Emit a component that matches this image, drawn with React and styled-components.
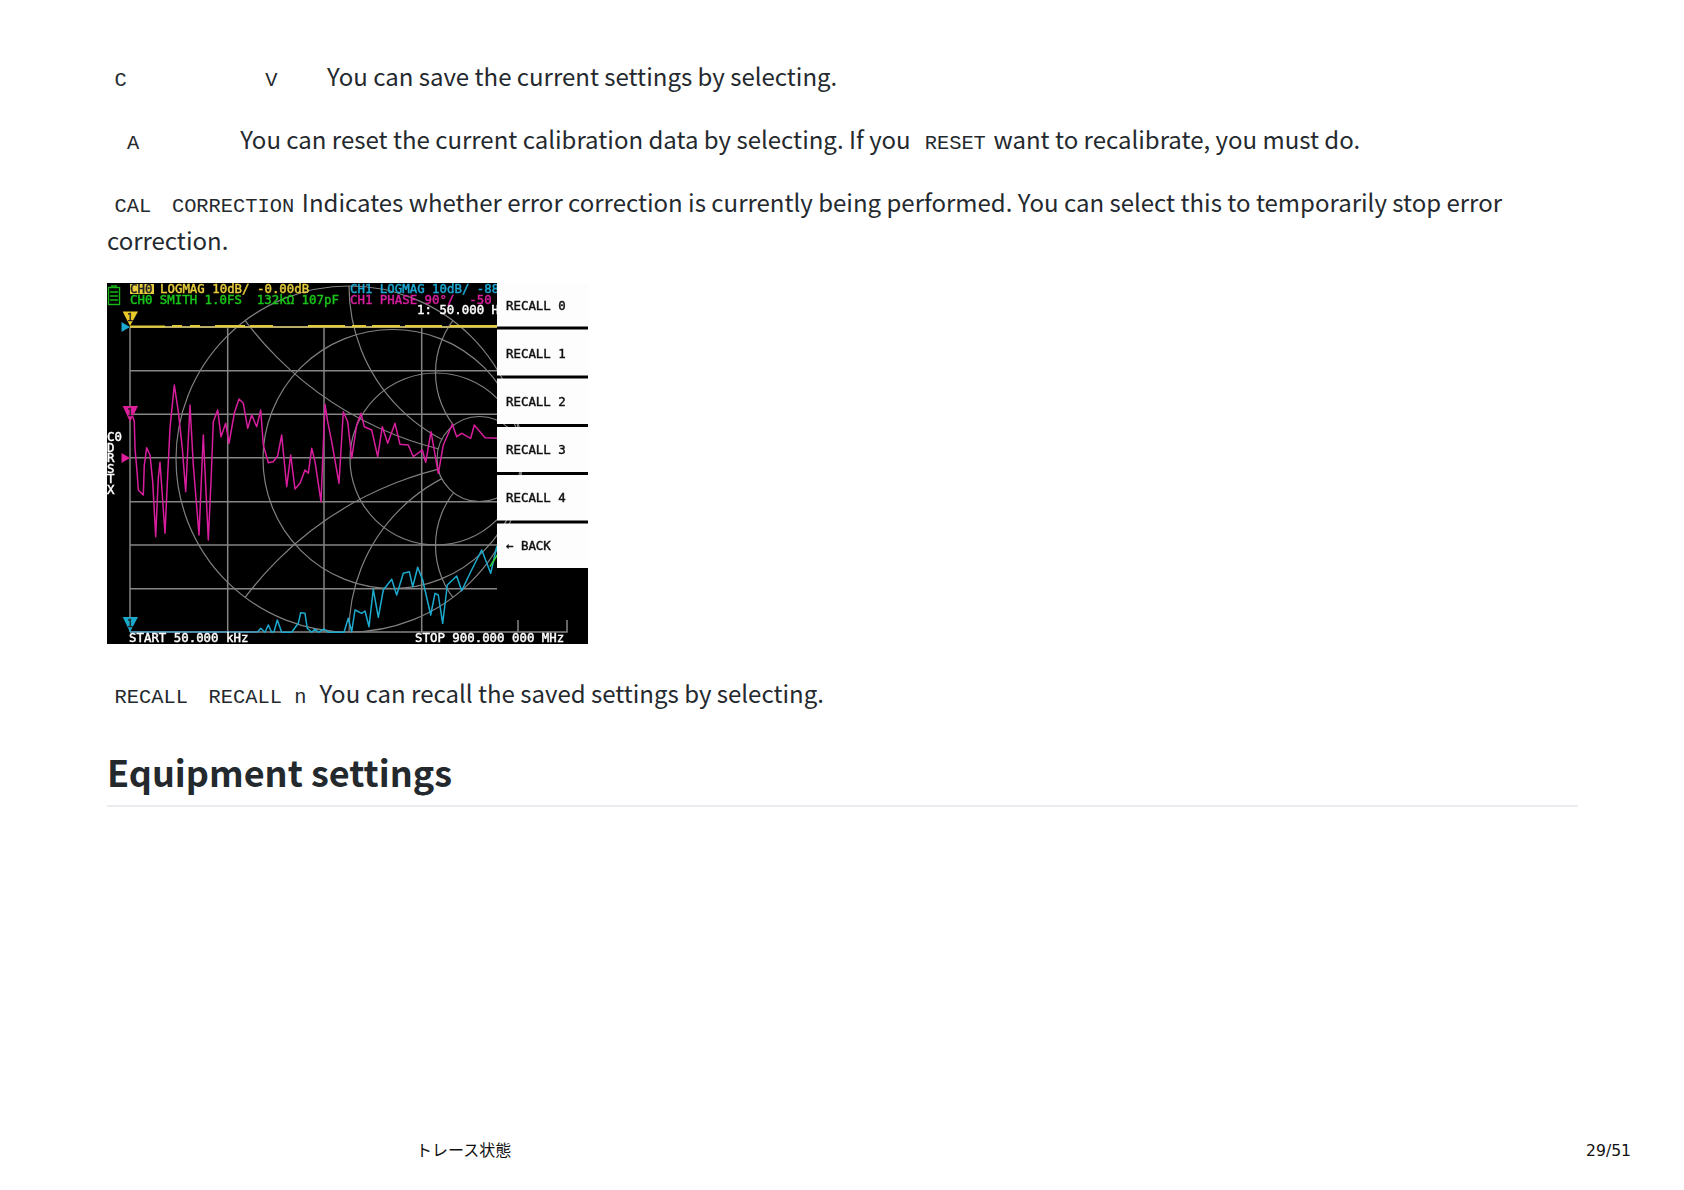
import React from "react";
import styled, { createGlobalStyle } from "styled-components";

const Global = createGlobalStyle`
  html, body { margin: 0; padding: 0; background: #fff; }
  body { font-family: "Noto Sans CJK JP", "Noto Sans", sans-serif; }
`;

const Page = styled.div`
  width: 1684px;
  height: 1190px;
  display: flex;
  flex-direction: column;
  overflow: hidden;
  background: #fff;
`;

const Main = styled.main`
  flex: 1;
  padding: 57px 106px 0 107px;
  color: #24292e;
  font-family: "Noto Sans CJK JP", sans-serif;
  font-size: 24px;
  line-height: 38.4px;
`;

const Para = styled.p`
  margin: 0 0 24.6px;
`;

const Code = styled.code`
  font-family: "Liberation Mono", monospace;
  font-size: 20.4px;
  line-height: 1;
  padding: 0 7.6px;
  margin-left: ${(p) => p.$before || 0}px;
  margin-right: ${(p) => p.$after || 0}px;
`;

const Heading = styled.h2`
  margin: 36px 0 0;
  padding-bottom: 11px;
  border-bottom: 2px solid #eaecef;
  font-size: 36px;
  line-height: 1.25;
  font-weight: 700;
  color: #24292e;
`;

const ShotWrap = styled.div`
  margin: -1px 0 30px;
  line-height: 0;
`;

const Shot = styled.svg`
  display: block;
  width: 481px;
  height: 361px;
  filter: blur(0.45px);
`;

const ScreenText = styled.text`
  font-family: "DejaVu Sans Mono", "Liberation Mono", monospace;
  font-size: 12.4px;
  font-weight: 400;
  white-space: pre;
  fill: ${(p) => p.$color || "#fff"};
  stroke: ${(p) => p.$color || "#fff"};
  stroke-width: 0.45px;
`;

const Footer = styled.footer`
  display: flex;
  justify-content: space-between;
  align-items: baseline;
  padding: 0 53px 28px 416px;
  font-family: "DejaVu Sans", "Noto Sans CJK JP", sans-serif;
  font-size: 15.6px;
  line-height: 22px;
  color: #111;
`;

const FooterTitle = styled.span`
  font-size: 16px;
`;

const pts = (ox, oy, a) =>
  a.map(([x, y]) => `${(ox + x / 3).toFixed(1)},${(oy + y / 3).toFixed(1)}`).join(" ");

const magentaA = [[20,85],[28,110],[30,190],[37,270],[40,315],[55,330],[58,240],[65,188],[75,210],[83,290],[92,455],[100,280],[105,232],[120,445],[128,270],[135,130],[148,0],[160,80],[172,190],[182,320],[195,60],[205,240],[222,450],[235,150],[250,465],[258,290],[265,110],[278,75],[288,155],[302,115],[312,175],[328,85],[342,42],[355,55],[368,130],[380,90],[395,125],[407,75],[415,180],[430,233],[445,230],[458,212],[470,150],[485,305],[497,210],[510,312],[525,295],[540,255],[550,265],[560,190],[570,230]];
const magentaB = [[30,230],[48,350],[60,58],[68,110],[80,170],[102,295],[115,80],[128,110],[140,220],[155,120],[168,85],[178,125],[200,135],[218,215],[232,125],[248,175],[270,115],[285,178],[310,180],[325,215],[352,195],[362,232],[378,140],[400,265],[415,180],[442,118],[455,155],[470,145],[497,160],[508,120],[540,158],[580,160]];
const cyan = [[22,307],[32,295],[45,307],[55,285],[65,307],[72,305],[82,270],[95,307],[125,307],[145,280],[152,248],[165,250],[172,295],[185,307],[195,297],[205,307],[222,297],[235,307],[282,307],[295,265],[305,305],[315,240],[335,250],[345,243],[357,290],[370,178],[385,262],[400,180],[425,148],[440,195],[460,130],[478,125],[488,170],[503,112],[518,150],[542,255],[555,190],[565,195],[578,280],[592,165],[620,138],[635,182],[660,130],[695,60],[722,130],[740,50],[745,80]];

const VERT = [130, 227.7, 324, 421.7];
const HORZ = [370.7, 414.3, 457.7, 501.7, 545, 588.7];
const MENU = [
  { label: "RECALL 0", top: 283, bottom: 326.5, text: 309.5 },
  { label: "RECALL 1", top: 329.5, bottom: 375.5, text: 358 },
  { label: "RECALL 2", top: 378.5, bottom: 424, text: 406 },
  { label: "RECALL 3", top: 427, bottom: 472, text: 454 },
  { label: "RECALL 4", top: 475, bottom: 520.5, text: 502 },
  { label: "← BACK", top: 523.5, bottom: 568, text: 550 },
];
const SIDE = [["C0", 441], ["D", 451.5], ["R", 462], ["S", 472.5], ["T", 483], ["X", 494]];
const GRID = "#858585";
const SMITH = "#808080";

function NanoVnaScreen() {
  return (
    <Shot viewBox="107 283 481 361" role="img" aria-label="NanoVNA recall menu">
      <defs>
        <clipPath id="smith-clip">
          <path
            clipRule="evenodd"
            d="M176 459a173 173 0 1 0 346 0a173 173 0 1 0 -346 0ZM437 459a42.5 42.5 0 1 0 85 0a42.5 42.5 0 1 0 -85 0Z"
          />
        </clipPath>
      </defs>
      <rect x="107" y="283" width="481" height="361" fill="#000" />

      {VERT.map((x) => (
        <line key={x} x1={x} x2={x} y1="327" y2="632" stroke={GRID} strokeWidth="1.5" />
      ))}
      {HORZ.map((y) => (
        <line key={y} x1="130" x2="497" y1={y} y2={y} stroke={GRID} strokeWidth="1.5" />
      ))}
      <path d="M130 632H567V620M518 632V620" fill="none" stroke={GRID} strokeWidth="1.5" />

      <g fill="none" stroke={SMITH} strokeWidth="1.2">
        <circle cx="349" cy="459" r="173" />
        <circle cx="392.5" cy="459" r="129.5" />
        <circle cx="436" cy="459" r="86" />
        <circle cx="479.5" cy="459" r="42.5" />
        <g clipPath="url(#smith-clip)">
          <circle cx="522" cy="113" r="346" />
          <circle cx="522" cy="805" r="346" />
          <circle cx="522" cy="286" r="173" />
          <circle cx="522" cy="632" r="173" />
          <circle cx="522" cy="372.5" r="86.5" />
          <circle cx="522" cy="545.5" r="86.5" />
        </g>
      </g>

      <line x1="130" x2="497" y1="327" y2="327" stroke="#b9ac68" strokeWidth="1.8" />
      <path d="M130 326.5H165M172 326H182M190 326H200M215 326H245M250 326H273M308 326H345M352 326H366M372 326H400M405 326H442M450 326H497" fill="none" stroke="#e2cb3a" strokeWidth="1.8" />

      <polyline points={pts(125, 385, magentaA)} fill="none" stroke="#d81e9e" strokeWidth="1.5" strokeLinejoin="round" />
      <polyline points={pts(305, 385, magentaB)} fill="none" stroke="#d81e9e" strokeWidth="1.5" strokeLinejoin="round" />
      <line x1="130" x2="257" y1="632" y2="632" stroke="#4a9cc4" strokeWidth="1.6" />
      <polyline points={pts(250, 530, cyan)} fill="none" stroke="#1cabcf" strokeWidth="1.5" strokeLinejoin="round" />
      <polyline points={pts(250, 530, [[720, 110], [745, 70]])} fill="none" stroke="#2ed82e" strokeWidth="1.5" />

      <polygon points="122.7,311.5 138,311.5 130,326" fill="#e8c92c" />
      <polygon points="122.7,406 138,406 130,422" fill="#de1f9c" />
      <polygon points="122.7,617 138,617 130,632" fill="#18a9cc" />
      <polygon points="121.5,322 130,327 121.5,332" fill="#1ca8d0" />
      <polygon points="121.5,453 130,458 121.5,463" fill="#de1f9c" />
      <ScreenText x="127" y="321" $color="#222" style={{ fontSize: 10 }}>1</ScreenText>
      <ScreenText x="127" y="416" $color="#222" style={{ fontSize: 10 }}>1</ScreenText>
      <ScreenText x="127" y="627" $color="#222" style={{ fontSize: 10 }}>1</ScreenText>

      <g fill="none" stroke="#19b519" strokeWidth="1.4">
        <rect x="108.5" y="287.5" width="11" height="17" />
        <path d="M111 286H117M110 292H118M110 296H118M110 300H118" />
      </g>

      <rect x="130" y="284" width="24" height="10" fill="#e6cc3c" />
      <ScreenText x="130" y="293" $color="#222">CH0</ScreenText>
      <ScreenText x="160" y="293" $color="#e6cc3c">LOGMAG 10dB/ -0.00dB</ScreenText>
      <ScreenText x="130" y="304" $color="#19c419">CH0 SMITH 1.0FS  132kΩ 107pF</ScreenText>
      <ScreenText x="350" y="293" $color="#1ba8d2">CH1 LOGMAG 10dB/ -88</ScreenText>
      <ScreenText x="350" y="304" $color="#d81e9e">CH1 PHASE 90°/  -50</ScreenText>
      <ScreenText x="417" y="314">1: 50.000 H</ScreenText>

      {SIDE.map(([t, y]) => (
        <ScreenText key={t} x="107" y={y}>{t}</ScreenText>
      ))}

      <ScreenText x="129" y="642">START 50.000 kHz</ScreenText>
      <ScreenText x="415" y="642">STOP 900.000 000 MHz</ScreenText>

      {MENU.map((m) => (
        <g key={m.label}>
          <rect x="497" y={m.top} width="91" height={m.bottom - m.top} fill="#fdfdfd" />
          <ScreenText x="506" y={m.text} $color="#111">{m.label}</ScreenText>
        </g>
      ))}
    </Shot>
  );
}

export default function App() {
  return (
    <Page>
      <Global />
      <Main>
        <Para>
          <Code>C</Code>
          <Code $before={123.2} $after={42}>V</Code>
          You can save the current settings by selecting.
        </Para>
        <Para>
          <Code $before={12.4} $after={93.4}>A</Code>
          You can reset the current calibration data by selecting. If you{" "}
          <Code $before={1}>RESET</Code>
          want to recalibrate, you must do.
        </Para>
        <Para>
          <Code>CAL</Code> <Code>CORRECTION</Code>
          Indicates whether error correction is currently being performed. You can select this to temporarily stop error correction.
        </Para>
        <ShotWrap>
          <NanoVnaScreen />
        </ShotWrap>
        <Para>
          <Code>RECALL</Code> <Code>RECALL n</Code> You can recall the saved settings by selecting.
        </Para>
        <Heading>Equipment settings</Heading>
      </Main>
      <Footer>
        <FooterTitle>トレース状態</FooterTitle>
        <span>29/51</span>
      </Footer>
    </Page>
  );
}
